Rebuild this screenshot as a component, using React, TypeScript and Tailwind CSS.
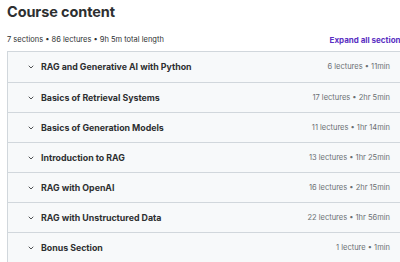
import React from 'react';
import { ChevronDown } from 'lucide-react';

const sections = [
  { title: 'RAG and Generative AI with Python', meta: '6 lectures • 11min' },
  { title: 'Basics of Retrieval Systems', meta: '17 lectures • 2hr 5min' },
  { title: 'Basics of Generation Models', meta: '11 lectures • 1hr 14min' },
  { title: 'Introduction to RAG', meta: '13 lectures • 1hr 25min' },
  { title: 'RAG with OpenAI', meta: '16 lectures • 2hr 15min' },
  { title: 'RAG with Unstructured Data', meta: '22 lectures • 1hr 56min' },
  { title: 'Bonus Section', meta: '1 lecture • 1min' },
];

const App: React.FC = () => {
  return (
    <div className="w-[400px] h-[262px] overflow-hidden bg-white text-[#2d2f31] font-['Inter','Liberation_Sans',sans-serif]">
      <div className="w-[405px] pl-[7px] pt-[1px]">
        <h2 className="text-[14.5px] font-bold leading-[22px] tracking-[-0.1px]">Course content</h2>
        <div className="flex justify-between items-center mt-[11px] mb-[5px] h-[12px]">
          <span className="text-[7.5px] text-[#2d2f31]">7 sections • 86 lectures • 9h 5m total length</span>
          <span className="text-[8px] font-bold text-[#5a2fc2]">Expand all sections</span>
        </div>
        <div className="border border-[#d1d7dc] border-r-0 w-[410px]">
          {sections.map((s, i) => (
            <div
              key={s.title}
              className={`flex items-center h-[30px] bg-[#f7f9fa] pl-[18px] pr-[27px] ${i > 0 ? 'border-t border-[#d1d7dc]' : ''}`}
            >
              <ChevronDown size={8} strokeWidth={2.5} className="text-[#2d2f31] ml-[1px] mr-[6px]" />
              <span className="text-[8.8px] font-bold flex-1">{s.title}</span>
              <span className="text-[7.5px] text-[#6a6f73]">{s.meta}</span>
            </div>
          ))}
        </div>
      </div>
    </div>
  );
};

export default App;
